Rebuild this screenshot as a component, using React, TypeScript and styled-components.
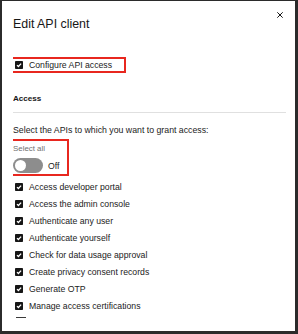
import styled, { createGlobalStyle } from "styled-components";

const GlobalStyle = createGlobalStyle`
  html, body {
    margin: 0;
    padding: 0;
    background: #2b2b2b;
  }
  body {
    font-family: "Liberation Sans", Arial, sans-serif;
    color: #262626;
  }
`;

const Frame = styled.div`
  box-sizing: border-box;
  margin: 1px 3px 3px 2px;
  width: 293px;
  height: 330px;
  background: #ffffff;
  padding: 0 9px 13px 11px;
  display: flex;
  flex-direction: column;
`;

const Header = styled.div`
  display: flex;
  justify-content: space-between;
  align-items: flex-start;
`;

const Title = styled.h2`
  margin: 15px 0 0;
  font-size: 12.4px;
  line-height: 16px;
  font-weight: 400;
  color: #161616;
`;

const Close = styled.svg`
  margin: 11px 3px 0 0;
  width: 6px;
  height: 6px;
`;

const Body = styled.div`
  flex: 1;
  min-height: 0;
  overflow: hidden;
`;

const Highlight = styled.div<{ w: number; shift: number }>`
  box-sizing: border-box;
  width: ${(p) => p.w}px;
  margin-left: ${(p) => p.shift}px;
  border: 2px solid #e8271f;
`;

const ConfigureBox = styled(Highlight)`
  margin-top: 25px;
  padding: 0 0 0 5px;
`;

const Row = styled.label<{ h: number }>`
  display: flex;
  align-items: center;
  gap: 6px;
  height: ${(p) => p.h}px;
  font-size: 8.7px;
  color: #222222;
  white-space: nowrap;
`;

const SectionTitle = styled.h3`
  margin: 20px 0 0;
  font-size: 8.1px;
  line-height: 12px;
  font-weight: 700;
  color: #161616;
`;

const Divider = styled.hr`
  margin: 7px 0 0;
  border: 0;
  height: 1px;
  background: #e0e0e0;
`;

const Description = styled.p`
  margin: 11px 0 0;
  font-size: 8.75px;
  line-height: 12px;
  color: #222222;
`;

const SelectAllBox = styled(Highlight)`
  margin-top: 3px;
  padding: 3px 0 1px 1px;
`;

const ToggleLabel = styled.div`
  font-size: 7.9px;
  line-height: 10px;
  color: #6f6f6f;
`;

const ToggleRow = styled.div`
  display: flex;
  align-items: center;
  gap: 5px;
  margin-top: 4px;
  font-size: 8.7px;
  color: #222222;
`;

const Track = styled.div<{ on: boolean }>`
  box-sizing: border-box;
  width: 30px;
  height: 15px;
  border-radius: 8px;
  padding: 2px;
  background: ${(p) => (p.on ? "#24a148" : "#8d8d8d")};
  display: flex;
  justify-content: ${(p) => (p.on ? "flex-end" : "flex-start")};
`;

const Knob = styled.div`
  width: 11px;
  height: 11px;
  border-radius: 50%;
  background: #ffffff;
`;

const List = styled.div`
  margin-top: 3px;
  padding-left: 2px;
`;

// top edge of the next item, cut off by the scroll area
const Peek = styled.div`
  margin: 2.5px 0 0 1px;
  width: 10px;
  height: 1.5px;
  background: #3a3a3a;
`;

function CheckBox() {
  return (
    <svg width="8" height="8" viewBox="0 0 8 8" style={{ flex: "none" }}>
      <rect x="0" y="0" width="8" height="8" rx="0.8" fill="#161616" />
      <polyline
        points="2,4.1 3.4,5.5 6.1,2.6"
        fill="none"
        stroke="#ffffff"
        strokeWidth="1.3"
      />
    </svg>
  );
}

const apis = [
  "Access developer portal",
  "Access the admin console",
  "Authenticate any user",
  "Authenticate yourself",
  "Check for data usage approval",
  "Create privacy consent records",
  "Generate OTP",
  "Manage access certifications",
];

function App() {
  return (
    <>
      <GlobalStyle />
      <Frame>
        <Header>
          <Title>Edit API client</Title>
          <Close viewBox="0 0 6 6">
            <path d="M0.3 0.3 L5.7 5.7 M5.7 0.3 L0.3 5.7" stroke="#161616" strokeWidth="1" />
          </Close>
        </Header>
        <Body>
          <ConfigureBox w={118} shift={-5}>
            <Row h={12}>
              <CheckBox />
              Configure API access
            </Row>
          </ConfigureBox>
          <SectionTitle>Access</SectionTitle>
          <Divider />
          <Description>Select the APIs to which you want to grant access:</Description>
          <SelectAllBox w={59} shift={-3}>
            <ToggleLabel>Select all</ToggleLabel>
            <ToggleRow>
              <Track on={false}>
                <Knob />
              </Track>
              Off
            </ToggleRow>
          </SelectAllBox>
          <List>
            {apis.map((api) => (
              <Row key={api} h={16.9}>
                <CheckBox />
                {api}
              </Row>
            ))}
            <Peek />
          </List>
        </Body>
      </Frame>
    </>
  );
}

export default App;
